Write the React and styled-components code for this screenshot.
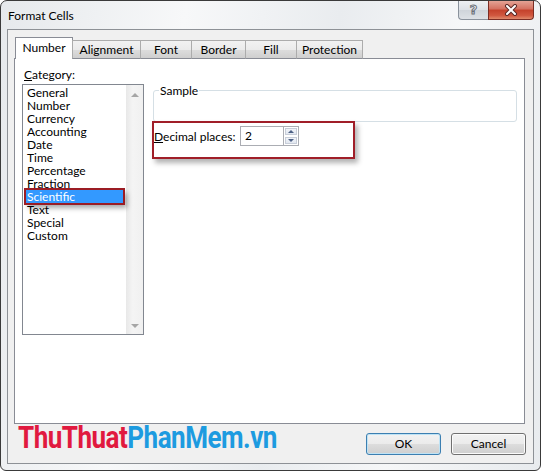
import React from "react";
import styled, { createGlobalStyle } from "styled-components";

const GlobalStyle = createGlobalStyle`
  html, body { margin: 0; padding: 0; background: #ffffff; }
  body { font-family: Lato, "Noto Sans", sans-serif; font-size: 12px; color: #000; }
`;

const categories = [
  "General",
  "Number",
  "Currency",
  "Accounting",
  "Date",
  "Time",
  "Percentage",
  "Fraction",
  "Scientific",
  "Text",
  "Special",
  "Custom",
];

const tabs = [
  { label: "Number", width: 58 },
  { label: "Alignment", width: 69 },
  { label: "Font", width: 52 },
  { label: "Border", width: 55 },
  { label: "Fill", width: 52 },
  { label: "Protection", width: 67 },
];

const App = () => {
  return (
    <>
      <GlobalStyle />
      <Window>
        <TitleBar>
          <Title>Format Cells</Title>
          <Controls>
            <HelpButton>?</HelpButton>
            <CloseButton>
              <svg width="14" height="12" viewBox="0 0 14 12">
                <path d="M3 2 L11 10 M11 2 L3 10" stroke="#5a2a26" strokeWidth="4" strokeLinecap="round" />
                <path d="M3 2 L11 10 M11 2 L3 10" stroke="#ffffff" strokeWidth="2" strokeLinecap="round" />
              </svg>
            </CloseButton>
          </Controls>
        </TitleBar>
        <Client>
          <TabRow>
            {tabs.map((t, i) => (
              <Tab key={t.label} $width={t.width} $active={i === 0}>
                {t.label}
              </Tab>
            ))}
          </TabRow>
          <Panel>
            <LeftColumn>
              <FieldLabel>
                <u>C</u>ategory:
              </FieldLabel>
              <ListBox>
                <Items>
                  {categories.map((c) => (
                    <Item key={c} $selected={c === "Scientific"}>
                      {c}
                    </Item>
                  ))}
                </Items>
                <ScrollBar>
                  <Arrow $dir="up" />
                  <Arrow $dir="down" />
                </ScrollBar>
              </ListBox>
            </LeftColumn>
            <RightColumn>
              <SampleGroup>
                <legend>Sample</legend>
              </SampleGroup>
              <DecimalArea>
                <DecimalRow>
                  <DecimalLabel>
                    <u>D</u>ecimal places:
                  </DecimalLabel>
                  <SpinInput>2</SpinInput>
                  <Spinner>
                    <SpinHalf>
                      <Arrow $dir="up" $small />
                    </SpinHalf>
                    <SpinHalf>
                      <Arrow $dir="down" $small />
                    </SpinHalf>
                  </Spinner>
                </DecimalRow>
                <Annotation />
              </DecimalArea>
            </RightColumn>
          </Panel>
          <Footer>
            <Watermark>
              <Red>ThuThuat</Red>
              <Blue>PhanMem.vn</Blue>
            </Watermark>
            <Buttons>
              <Button $default>OK</Button>
              <Button>Cancel</Button>
            </Buttons>
          </Footer>
        </Client>
      </Window>
    </>
  );
};

const Window = styled.div`
  box-sizing: border-box;
  width: 541px;
  height: 471px;
  border: 1px solid #3a3a3a;
  border-radius: 7px 7px 6px 6px;
  background: linear-gradient(100deg, #e6e9ec 0%, #f7f8f9 30%, #e9ecef 55%, #f6f7f8 75%, #e8ebee 100%);
  padding: 0 6px 6px 6px;
  display: flex;
  flex-direction: column;
`;

const TitleBar = styled.div`
  height: 28px;
  display: flex;
  justify-content: space-between;
  align-items: flex-start;
`;

const Title = styled.div`
  padding: 7px 0 0 1px;
  font-size: 12px;
  line-height: 15px;
  color: #000;
`;

const Controls = styled.div`
  display: flex;
`;

const HelpButton = styled.div`
  box-sizing: border-box;
  width: 30px;
  height: 19px;
  border: 1px solid #8a929c;
  border-top: none;
  border-right: none;
  border-radius: 0 0 0 4px;
  background: linear-gradient(#eef0f3, #dde1e6 50%, #cfd4da 51%, #dde1e6);
  text-align: center;
  font-family: "DejaVu Sans", sans-serif;
  font-size: 13px;
  font-weight: bold;
  line-height: 17px;
  color: #eef0f2;
  -webkit-text-stroke: 1px #6b7078;
`;

const CloseButton = styled.div`
  box-sizing: border-box;
  width: 46px;
  height: 19px;
  border: 1px solid #7a2d24;
  border-top: none;
  border-radius: 0 0 4px 0;
  background: linear-gradient(#e4a395, #d4705f 45%, #c4412b 50%, #d0573f 80%, #e08a6c);
  display: flex;
  align-items: center;
  justify-content: center;
`;

const Client = styled.div`
  flex: 1;
  border: 1px solid #8d9196;
  background: #f0f0f0;
  padding: 8px 8px 0 6px;
  display: flex;
  flex-direction: column;
`;

const TabRow = styled.div`
  display: flex;
  align-items: flex-end;
  height: 21px;
  margin: 0 0 -1px 1px;
  position: relative;
  z-index: 1;
`;

const Tab = styled.div`
  box-sizing: border-box;
  width: ${(p) => p.$width}px;
  height: ${(p) => (p.$active ? 22 : 19)}px;
  margin-left: -1px;
  border: 1px solid ${(p) => (p.$active ? "#898c95" : "#acacac")};
  border-bottom: ${(p) => (p.$active ? "none" : "1px solid #898c95")};
  background: ${(p) => (p.$active ? "#ffffff" : "linear-gradient(#f2f2f2, #ebebeb 50%, #dddddd 51%, #cfcfcf)")};
  text-align: center;
  line-height: ${(p) => (p.$active ? 19 : 17)}px;
  font-size: 12px;
  &:first-child {
    margin-left: 0;
  }
`;

const Panel = styled.div`
  box-sizing: border-box;
  height: 366px;
  border: 1px solid #898c95;
  background: #ffffff;
  display: flex;
  padding: 8px 0 0 7px;
`;

const LeftColumn = styled.div`
  width: 122px;
  display: flex;
  flex-direction: column;
`;

const FieldLabel = styled.div`
  padding-left: 2px;
  line-height: 16px;
  height: 16px;
  margin-bottom: 1px;
`;

const ListBox = styled.div`
  box-sizing: border-box;
  width: 122px;
  height: 251px;
  border: 1px solid #828790;
  display: flex;
`;

const Items = styled.div`
  flex: 1;
  padding-top: 1px;
`;

const Item = styled.div`
  height: 13px;
  line-height: 13px;
  font-size: 12px;
  overflow: visible;
  padding-left: ${(p) => (p.$selected ? 1 : 4)}px;
  margin: ${(p) => (p.$selected ? "0 3px 0 3px" : "0")};
  background: ${(p) => (p.$selected ? "#3399ff" : "transparent")};
  color: ${(p) => (p.$selected ? "#ffffff" : "#000000")};
  box-shadow: ${(p) => (p.$selected ? "0 0 0 2px #9b1c24, 3px 4px 5px 1px rgba(0,0,0,0.35)" : "none")};
  position: relative;
`;

const ScrollBar = styled.div`
  width: 17px;
  background: linear-gradient(90deg, #e8e8e8, #f4f4f4 40%, #f0f0f0);
  display: flex;
  flex-direction: column;
  justify-content: space-between;
  align-items: center;
  padding: 8px 0 6px;
  box-sizing: border-box;
`;

const Arrow = styled.div`
  width: 0;
  height: 0;
  border-left: ${(p) => (p.$small ? 3 : 4)}px solid transparent;
  border-right: ${(p) => (p.$small ? 3 : 4)}px solid transparent;
  ${(p) =>
    p.$dir === "up"
      ? `border-bottom: ${p.$small ? 3 : 4}px solid ${p.$small ? "#4d6185" : "#a6a6a6"};`
      : `border-top: ${p.$small ? 3 : 4}px solid ${p.$small ? "#4d6185" : "#a6a6a6"};`}
`;

const RightColumn = styled.div`
  width: 364px;
  margin-left: 9px;
  padding-top: 16px;
  display: flex;
  flex-direction: column;
`;

const SampleGroup = styled.fieldset`
  box-sizing: border-box;
  margin: 0;
  height: 39px;
  padding: 0 5px;
  border: 1px solid #d5dfe5;
  border-radius: 3px;
  legend {
    padding: 0 1px;
    font-size: 12px;
    line-height: 15px;
  }
`;

const DecimalArea = styled.div`
  position: relative;
  padding-top: 4px;
`;

const DecimalRow = styled.div`
  display: flex;
  align-items: center;
  height: 20px;
`;

const DecimalLabel = styled.div`
  width: 87px;
  padding-left: 1px;
  box-sizing: border-box;
`;

const SpinInput = styled.div`
  box-sizing: border-box;
  width: 43px;
  height: 20px;
  border: 1px solid #abadb3;
  border-right: none;
  padding-left: 4px;
  line-height: 18px;
`;

const Spinner = styled.div`
  box-sizing: border-box;
  width: 16px;
  height: 20px;
  border: 1px solid #abadb3;
  display: flex;
  flex-direction: column;
`;

const SpinHalf = styled.div`
  flex: 1;
  display: flex;
  align-items: center;
  justify-content: center;
  background: linear-gradient(#f4f6fa, #dfe5ee);
  border: 1px solid #ffffff;
  box-shadow: inset 0 0 0 1px #c7cdd8;
`;

const Annotation = styled.div`
  position: absolute;
  left: -1px;
  top: -1px;
  width: 203px;
  height: 38px;
  box-sizing: border-box;
  border: 2px solid #a01e28;
  box-shadow: 3px 4px 5px rgba(0, 0, 0, 0.3);
  pointer-events: none;
`;

const Footer = styled.div`
  flex: 1;
  display: flex;
  justify-content: space-between;
  align-items: flex-start;
  margin-right: -1px;
`;

const Watermark = styled.div`
  margin-left: 4px;
  font-family: Roboto, "Liberation Sans", sans-serif;
  font-weight: bold;
  font-size: 31px;
  line-height: 28px;
  letter-spacing: -0.6px;
  transform: scaleX(0.84);
  transform-origin: left top;
  white-space: nowrap;
`;

const Red = styled.span`
  color: #e1193f;
`;

const Blue = styled.span`
  color: #1d9be0;
`;

const Buttons = styled.div`
  display: flex;
  gap: 10px;
  padding-top: 9px;
`;

const Button = styled.div`
  box-sizing: border-box;
  width: 75px;
  height: 22px;
  border: 1px solid ${(p) => (p.$default ? "#3c7fb1" : "#707070")};
  border-radius: 3px;
  background: linear-gradient(#f2f2f2, #ebebeb 50%, #dddddd 51%, #cfcfcf);
  box-shadow: ${(p) => (p.$default ? "inset 0 0 0 1px #bfe3f5" : "inset 0 0 0 1px #fbfbfb")};
  text-align: center;
  line-height: 20px;
  font-size: 12px;
`;

export default App;
